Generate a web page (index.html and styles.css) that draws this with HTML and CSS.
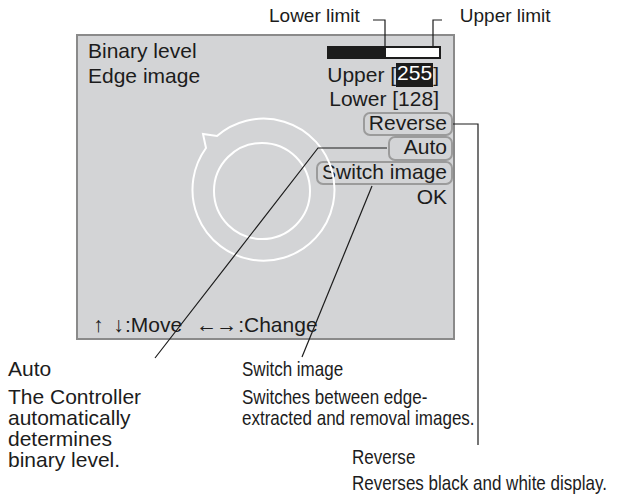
FILE: index.html
```html
<!DOCTYPE html>
<html lang="en">
<head>
  <meta charset="UTF-8">
  <title>Binary level</title>
  <link rel="stylesheet" href="styles.css">
</head>
<body>

  <div class="page">
    <div class="limits">
      <span class="limit limit-lower">Lower limit</span>
      <span class="limit limit-upper">Upper limit</span>
    </div>

    <div class="screen">
      <div class="screen-top">
        <div class="col-left">
          <div>Binary level</div>
          <div>Edge image</div>
        </div>
        <div class="col-right">
          <div class="bar"><span class="bar-fill"></span></div>
          <div class="row row-val">Upper [<span class="sel">255</span>]</div>
          <div class="row row-val">Lower [128]</div>
          <div class="row"><span class="pill">Reverse</span></div>
          <div class="row"><span class="pill pill-auto">Auto</span></div>
          <div class="row"><span class="pill">Switch image</span></div>
          <div class="row row-ok">OK</div>
        </div>
      </div>
      <div class="hint"><span class="ud">↑ ↓</span>:Move<span class="lr">←→</span>:Change</div>
    </div>

    <div class="notes">
      <div class="note note-auto">
        <div class="note-title">Auto</div>
        <p>The Controller<br>automatically<br>determines<br>binary level.</p>
      </div>
      <div class="note note-switch">
        <div class="note-title">Switch image</div>
        <p>Switches between edge-<br>extracted and removal images.</p>
      </div>
      <div class="note note-reverse">
        <div class="note-title">Reverse</div>
        <p>Reverses black and white display.</p>
      </div>
    </div>

    <svg class="overlay" width="620" height="498" viewBox="0 0 620 498">
      <!-- dial drawn on the screen -->
      <g class="dial">
        <path d="M217 136 A71 71 0 1 1 206 148 L203 134 Z"/>
        <circle cx="262" cy="191" r="48"/>
      </g>
      <!-- callout lines -->
      <g class="leads">
        <polyline points="373,20 385,20 385,46"/>
        <polyline points="442,20 433,20 433,46"/>
        <polyline points="453,124 478,124 478,445"/>
        <polyline points="387,148 318,148 155,358"/>
        <polyline points="372,186 302,357"/>
      </g>
    </svg>
  </div>

</body>
</html>
```

FILE: styles.css
```css
body {
  margin: 0;
  font-family: "Liberation Sans", Arial, sans-serif;
  color: #1c1c1c;
  background: #ffffff;
}

.page {
  position: relative;
  width: 620px;
  height: 498px;
  overflow: hidden;
}

.limits {
  display: flex;
  height: 34px;
  box-sizing: border-box;
  padding-top: 4px;
  font-size: 19px;
  line-height: 24px;
}

.limit-lower {
  margin-left: 269px;
}

.limit-upper {
  margin-left: 100px;
}

.screen {
  display: flex;
  flex-direction: column;
  margin-left: 76px;
  width: 379px;
  height: 306px;
  box-sizing: border-box;
  padding-top: 2px;
  border: 2px solid #8a8a8a;
  background: #d3d4d6;
  font-size: 21px;
}

.screen-top {
  display: flex;
  justify-content: space-between;
}

.col-left {
  padding-left: 10px;
  line-height: 25px;
}

.col-right {
  display: flex;
  flex-direction: column;
  align-items: flex-end;
}

.bar {
  display: flex;
  width: 114px;
  height: 13px;
  box-sizing: border-box;
  margin: 8px 12px 4px 0;
  border: 2px solid #1c1c1c;
  background: #ffffff;
}

.bar-fill {
  width: 57px;
  background: #1c1c1c;
}

.row {
  display: flex;
  height: 24.4px;
  line-height: 24.4px;
}

.row-val {
  margin-right: 14px;
}

.row-ok {
  margin-right: 6px;
}

.sel {
  display: inline-block;
  line-height: 19px;
  background: #1c1c1c;
  color: #ffffff;
  padding: 0 1px;
}

.pill {
  display: inline-block;
  padding: 0 4px;
  border: 2px solid #9b9b9b;
  border-radius: 7px;
  line-height: 17px;
}

.pill-auto {
  padding-left: 14px;
}

.hint {
  margin-top: auto;
  padding: 0 0 1px 15px;
  line-height: 25px;
}

.ud {
  display: inline-block;
  width: 32px;
  word-spacing: 4px;
}

.lr {
  display: inline-block;
  width: 44px;
  margin-left: 12px;
  letter-spacing: -1px;
  text-align: center;
}

.notes {
  display: grid;
  grid-template-columns: 234px 110px 1fr;
  margin-top: 18px;
  padding-left: 8px;
  font-size: 21px;
}

.note-title {
  line-height: 21px;
}

.note p {
  margin: 7px 0 0;
  line-height: 21px;
}

.note-auto {
  grid-row: 1 / 3;
}

.note-switch,
.note-reverse {
  white-space: nowrap;
  transform: scaleX(0.81);
  transform-origin: 0 0;
}

.note-switch {
  grid-column: 2 / 4;
}

.note-reverse {
  grid-column: 3;
  margin-top: 18px;
}

.note-reverse p {
  margin-top: 5px;
}

.overlay {
  position: absolute;
  left: 0;
  top: 0;
  pointer-events: none;
}

.dial {
  fill: none;
  stroke: #ffffff;
  stroke-width: 2;
}

.leads {
  fill: none;
  stroke: #1c1c1c;
  stroke-width: 1.2;
}
```
